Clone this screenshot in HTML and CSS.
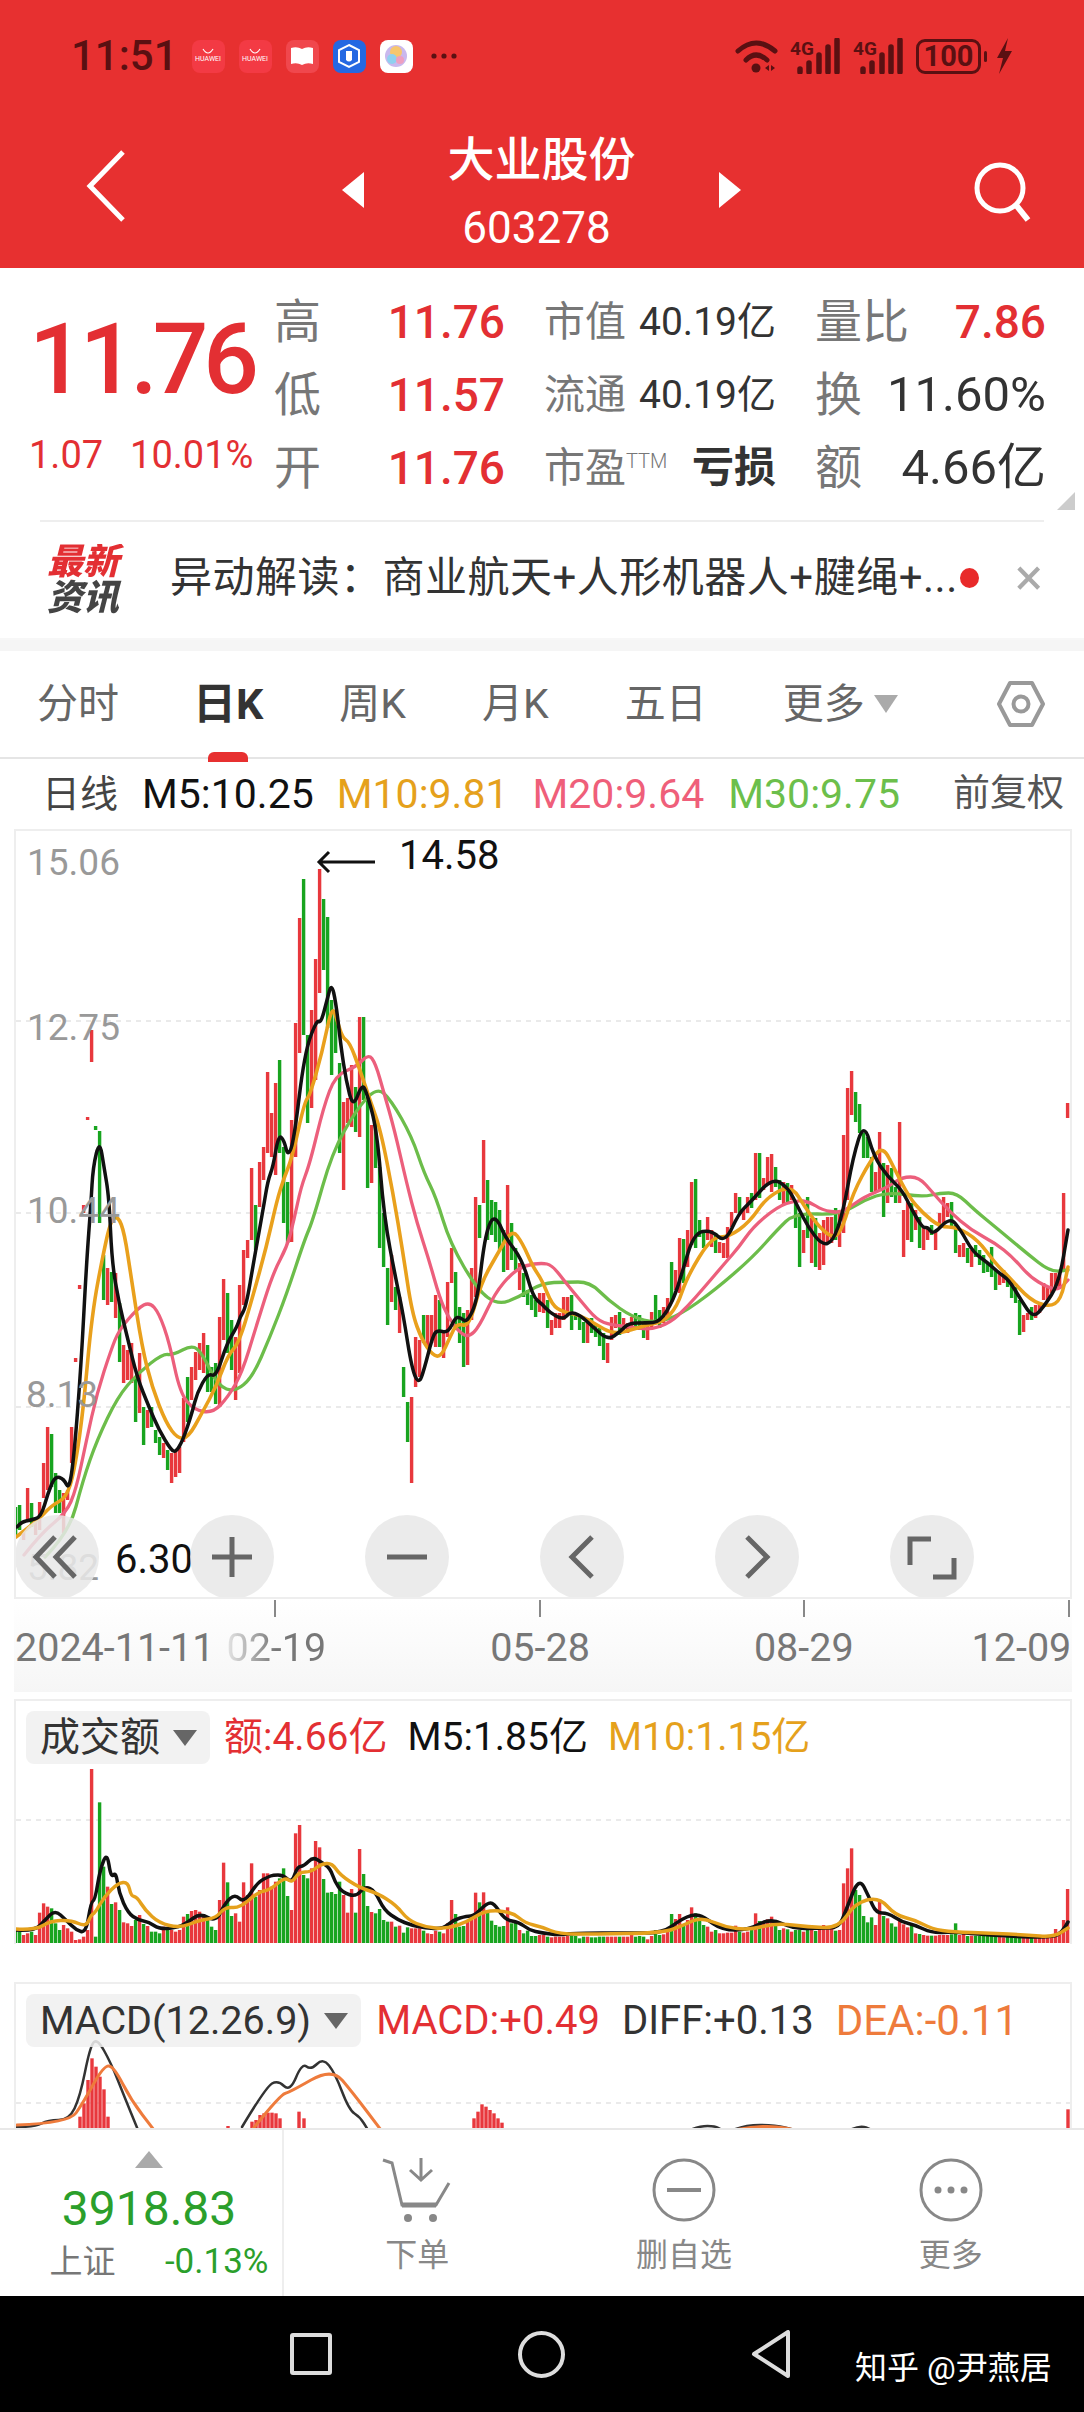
FILE: index.html
```html
<!DOCTYPE html>
<html lang="zh-CN">
<head>
	<meta charset="UTF-8">
	<title>大业股份 603278</title>
	<link rel="stylesheet" href="styles.css">
</head>
<body>
	<header class="top">
		<div class="status">
			<span class="time">11:51</span>
			<div class="apps">
				<span class="app app-hw"><svg width="14" height="7" viewBox="0 0 14 7"><path d="M2 1Q7 9 12 1" fill="none" stroke="#fff" stroke-width="1.2"/></svg><i>HUAWEI</i></span>
				<span class="app app-hw"><svg width="14" height="7" viewBox="0 0 14 7"><path d="M2 1Q7 9 12 1" fill="none" stroke="#fff" stroke-width="1.2"/></svg><i>HUAWEI</i></span>
				<span class="app app-book"><svg width="24" height="22" viewBox="0 0 24 22"><path d="M1 3Q7 1 12 4Q17 1 23 3V19Q17 17 12 20Q7 17 1 19Z" fill="#fff"/></svg></span>
				<span class="app app-blue"><svg width="28" height="28" viewBox="0 0 28 28"><path d="M14 3L24 8V20L14 25L4 20V8Z" fill="none" stroke="#fff" stroke-width="2"/><path d="M11 9V18Q14 21 17 18V9" fill="#fff"/></svg></span>
				<span class="app app-ball"><svg width="26" height="26" viewBox="0 0 26 26"><circle cx="13" cy="13" r="11" fill="#c9b8ee"/><circle cx="13" cy="9" r="6" fill="#f7c66e"/><circle cx="9" cy="16" r="5" fill="#8fd0ef"/><circle cx="17" cy="17" r="4" fill="#ee9fc0"/></svg></span>
			</div>
			<svg class="more-dots" width="26" height="6" viewBox="0 0 26 6"><circle cx="3" cy="3" r="2.6" fill="#5a1012"/><circle cx="13" cy="3" r="2.6" fill="#5a1012"/><circle cx="23" cy="3" r="2.6" fill="#5a1012"/></svg>
			<div class="sys">
				<svg class="wifi" width="43" height="36" viewBox="0 0 43 36">
					<path d="M3 13Q21-3 40 13M11 22Q21 12 32 22" fill="none" stroke="#5a1012" stroke-width="5" stroke-linecap="round"/>
					<circle cx="21" cy="30" r="4.5" fill="#5a1012"/>
					<path d="M30 30l4-3v6zM36 27l4 3-4 3z" fill="#5a1012"/>
				</svg>
				<svg class="signal" width="50" height="36" viewBox="0 0 50 36">
					<text x="0" y="17" class="signal-txt">4G</text>
					<path d="M10 31V34M19 25V34M29 17V34M38 9V34M47 2V34" stroke="#5a1012" stroke-width="5.5" stroke-linecap="round"/>
				</svg>
				<svg class="signal" width="50" height="36" viewBox="0 0 50 36">
					<text x="0" y="17" class="signal-txt">4G</text>
					<path d="M10 31V34M19 25V34M29 17V34M38 9V34M47 2V34" stroke="#5a1012" stroke-width="5.5" stroke-linecap="round"/>
				</svg>
				<span class="battery">100</span>
				<span class="battery-nub"></span>
				<svg class="bolt" width="18" height="36" viewBox="0 0 18 36"><path d="M13 0L2 20H8L4 36L17 13H10Z" fill="#5a1012"/></svg>
			</div>
		</div>
		<div class="title-row">
			<svg class="back" width="40" height="72" viewBox="0 0 40 72"><path d="M37 2L4 36L37 70" fill="none" stroke="#fff" stroke-width="5"/></svg>
			<div class="stock">
				<span class="tri tri-left"></span>
				<div class="stock-name">
					<div class="name">大业股份</div>
					<div class="code">603278</div>
				</div>
				<span class="tri tri-right"></span>
			</div>
			<svg class="search" width="60" height="62" viewBox="0 0 60 62"><circle cx="27" cy="26" r="23" fill="none" stroke="#fff" stroke-width="5"/><path d="M43 43L55 58" stroke="#fff" stroke-width="6"/></svg>
		</div>
	</header>

	<section class="quote">
		<div class="price-box">
			<div class="price">11.76</div>
			<div class="change"><span>1.07</span><span>10.01%</span></div>
		</div>
		<div class="stats">
			<div class="stat"><span class="lab lab-lg">高</span><span class="val red">11.76</span></div>
			<div class="stat"><span class="lab">市值</span><span class="num">40.19亿</span></div>
			<div class="stat"><span class="lab lab-lg">量比</span><span class="val red">7.86</span></div>
			<div class="stat"><span class="lab lab-lg">低</span><span class="val red">11.57</span></div>
			<div class="stat"><span class="lab">流通</span><span class="num">40.19亿</span></div>
			<div class="stat"><span class="lab lab-lg">换</span><span class="val val-dark">11.60%</span></div>
			<div class="stat"><span class="lab lab-lg">开</span><span class="val red">11.76</span></div>
			<div class="stat"><span class="lab">市盈<sup>TTM</sup></span><span class="num loss">亏损</span></div>
			<div class="stat"><span class="lab lab-lg">额</span><span class="val val-dark">4.66亿</span></div>
		</div>
		<span class="corner"></span>
	</section>

	<section class="news">
		<div class="news-logo"><b>最新资讯</b></div>
		<div class="news-text">异动解读：商业航天+人形机器人+腱绳+...</div>
		<span class="news-dot"></span>
		<span class="news-close">×</span>
	</section>
	<div class="band"></div>

	<nav class="tabs">
		<a class="tab">分时</a>
		<a class="tab on">日K</a>
		<a class="tab">周K</a>
		<a class="tab">月K</a>
		<a class="tab">五日</a>
		<a class="tab">更多<i class="tab-arrow"></i></a>
		<svg class="gear" width="50" height="48" viewBox="0 0 50 48"><path d="M14 3H36L47 24L36 45H14L3 24Z" fill="none" stroke="#999" stroke-width="4" stroke-linejoin="round"/><circle cx="25" cy="24" r="7.5" fill="none" stroke="#999" stroke-width="4"/></svg>
	</nav>

	<div class="legend">
		<span class="legend-name">日线</span>
		<span class="m5">M5:10.25</span>
		<span class="m10">M10:9.81</span>
		<span class="m20">M20:9.64</span>
		<span class="m30">M30:9.75</span>
		<span class="legend-right">前复权</span>
	</div>

	<section class="panel kline">
		<svg id="kline-svg" width="1054" height="766" viewBox="16 831 1054 766">
			<path class="grid-line" d="M16 1021H1070M16 1213H1070M16 1407H1070"/>
			<g id="kline-bars"></g>
			<g id="kline-lines"></g>
			<text class="axis-val" x="27" y="875">15.06</text>
			<text class="axis-val" x="27" y="1040">12.75</text>
			<text class="axis-val" x="27" y="1223">10.44</text>
			<text class="axis-val" x="26" y="1407">8.13</text>
			<text class="axis-val" x="27" y="1580">5.82</text>
			<path d="M375 862H320M329 852L319 862L329 872" fill="none" stroke="#111" stroke-width="3"/>
			<text class="mark-val" x="399" y="869">14.58</text>
			<text class="mark-val" x="115" y="1573">6.30</text>
		</svg>
		<div class="zoom-btns">
			<span class="zbtn"><svg width="84" height="84" viewBox="0 0 84 84"><path d="M40 22L21 42L40 62M60 22L41 42L60 62" class="zicon"/></svg></span>
			<span class="zbtn"><svg width="84" height="84" viewBox="0 0 84 84"><path d="M22 42H62M42 22V62" class="zicon"/></svg></span>
			<span class="zbtn"><svg width="84" height="84" viewBox="0 0 84 84"><path d="M22 42H62" class="zicon"/></svg></span>
			<span class="zbtn"><svg width="84" height="84" viewBox="0 0 84 84"><path d="M52 22L32 42L52 62" class="zicon"/></svg></span>
			<span class="zbtn"><svg width="84" height="84" viewBox="0 0 84 84"><path d="M32 22L52 42L32 62" class="zicon"/></svg></span>
			<span class="zbtn"><svg width="84" height="84" viewBox="0 0 84 84"><path d="M20 50V24H41M64 43V62H43" class="zicon"/></svg></span>
		</div>
	</section>

	<div class="axis">
		<div class="ticks"><i></i><i></i><i></i><i></i></div>
		<div class="dates">
			<span>2024-11-11</span>
			<span class="fade">02-19</span>
			<span>05-28</span>
			<span>08-29</span>
			<span>12-09</span>
		</div>
	</div>

	<section class="panel volume">
		<svg id="vol-svg" width="1054" height="243" viewBox="16 1701 1054 243">
			<path class="grid-line" d="M16 1820H1070"/>
			<g id="vol-bars"></g>
			<g id="vol-lines"></g>
		</svg>
		<div class="panel-head">
			<span class="chip">成交额<i class="chip-arrow"></i></span>
			<span class="red">额:4.66亿</span>
			<span class="m5">M5:1.85亿</span>
			<span class="m10">M10:1.15亿</span>
		</div>
	</section>

	<section class="panel macd">
		<svg id="macd-svg" width="1054" height="144" viewBox="16 1984 1054 144">
			<path class="grid-line" d="M16 2103H1070"/>
			<g id="macd-bars"></g>
			<g id="macd-lines"></g>
		</svg>
		<div class="panel-head">
			<span class="chip">MACD(12.26.9)<i class="chip-arrow"></i></span>
			<span class="red">MACD:+0.49</span>
			<span class="diff">DIFF:+0.13</span>
			<span class="dea">DEA:-0.11</span>
		</div>
	</section>

	<footer class="bottom">
		<div class="index">
			<i class="index-arrow"></i>
			<div class="index-val">3918.83</div>
			<div class="index-row"><span class="index-name">上证</span><span class="index-pct">-0.13%</span></div>
		</div>
		<a class="action">
			<svg width="76" height="72" viewBox="0 0 76 72"><path d="M4 6L13 9L23 51H57L70 29" fill="none" stroke="#888" stroke-width="3"/><path d="M23 51H57" stroke="#888" stroke-width="5"/><path d="M42 4V25M31 16L42 26L53 16" fill="none" stroke="#888" stroke-width="3"/><circle cx="29" cy="64" r="4" fill="#888"/><circle cx="54" cy="64" r="4" fill="#888"/></svg>
			<span>下单</span>
		</a>
		<a class="action">
			<svg width="76" height="72" viewBox="0 0 76 72"><circle cx="38" cy="36" r="30" fill="none" stroke="#888" stroke-width="3"/><path d="M21 36H55" stroke="#888" stroke-width="4"/></svg>
			<span>删自选</span>
		</a>
		<a class="action">
			<svg width="76" height="72" viewBox="0 0 76 72"><circle cx="38" cy="36" r="30" fill="none" stroke="#888" stroke-width="3"/><circle cx="25" cy="36" r="3.5" fill="#888"/><circle cx="38" cy="36" r="3.5" fill="#888"/><circle cx="51" cy="36" r="3.5" fill="#888"/></svg>
			<span>更多</span>
		</a>
	</footer>

	<div class="sysnav">
		<span class="nav-square"></span>
		<span class="nav-circle"></span>
		<svg width="40" height="48" viewBox="0 0 40 48"><path d="M37 2V46L3 24Z" fill="none" stroke="#ddd" stroke-width="4" stroke-linejoin="round"/></svg>
		<span class="watermark">知乎 @尹燕居</span>
	</div>

	<script src="chart.js"></script>
</body>
</html>
```

FILE: styles.css
```css
html,body{
	margin:0;
	background:#fff;
}
body{
	width:1084px;
	height:2412px;
	overflow:hidden;
	font-family:Roboto,"Noto Sans CJK SC",sans-serif;
	color:#333;
}
i{font-style:normal;}
.red{color:#e32f33;}

/* header */
.top{
	height:268px;
	background:#e73030;
	color:#fff;
}
.status{
	height:112px;
	padding:0 71px;
	display:flex;
	align-items:center;
	box-sizing:border-box;
}
.time{
	font-size:42px;
	font-weight:500;
	line-height:48px;
	color:#5a1012;
}
.apps{
	display:flex;
	gap:14px;
	margin-left:14px;
}
.app{
	width:33px;
	height:33px;
	border-radius:8px;
	display:flex;
	flex-direction:column;
	align-items:center;
	justify-content:center;
	overflow:hidden;
}
.app-hw{background:#f33a44;}
.app-hw i{
	font-size:7px;
	line-height:9px;
	color:#fff;
}
.app-book{background:#f0474d;}
.app-blue{background:#2468e2;}
.app-ball{background:#fff;}
.more-dots{margin-left:18px;}
.sys{
	margin-left:auto;
	display:flex;
	align-items:center;
}
.signal,.wifi{display:block;}
.wifi{margin-right:12px;}
.signal{margin-right:13px;}
.signal-txt{
	font-size:19px;
	font-weight:700;
	fill:#5a1012;
}
.battery{
	width:65px;
	height:35px;
	box-sizing:border-box;
	border:3px solid #5a1012;
	border-radius:9px;
	text-align:center;
	font-size:29px;
	font-weight:700;
	line-height:29px;
	color:#5a1012;
}
.battery-nub{
	width:3px;
	height:11px;
	margin:0 8px 0 3px;
	background:#5a1012;
	border-radius:2px;
}
.title-row{
	margin-top:14px;
	padding:0 51px 0 86px;
	display:flex;
	align-items:center;
	justify-content:space-between;
}
.back{
	align-self:flex-start;
	margin-top:24px;
}
.search{
	align-self:flex-start;
	margin-top:36px;
}
.stock{
	display:flex;
	align-items:center;
	width:399px;
	justify-content:space-between;
	margin-left:-16px;
}
.tri{
	width:0;
	height:0;
	border-top:18px solid transparent;
	border-bottom:18px solid transparent;
	margin-bottom:8px;
}
.tri-left{border-right:22px solid #fff;}
.tri-right{border-left:22px solid #fff;}
.stock-name{text-align:center;}
.name{
	font-size:47px;
	font-weight:500;
	line-height:68px;
}
.code{
	margin-right:10px;
	font-size:44px;
	line-height:68px;
}

/* quote */
.quote{
	position:relative;
	height:252px;
	padding:17px 0 0 29px;
	box-sizing:border-box;
	display:flex;
}
.price-box{
	width:245px;
	flex:none;
}
.price{
	font-size:98px;
	font-weight:500;
	letter-spacing:-5px;
	line-height:110px;
	margin-top:20px;
	color:#e32f33;
}
.change{
	display:flex;
	gap:27px;
	margin-top:18px;
	font-size:38px;
	line-height:44px;
	color:#e32f33;
}
.stats{
	display:grid;
	grid-template-columns:231px 232px 231px;
	grid-auto-rows:73px;
	column-gap:39px;
}
.stat{
	display:flex;
	align-items:center;
	justify-content:space-between;
}
.lab{
	font-size:41px;
	color:#777;
	line-height:50px;
}
.lab-lg{font-size:47px;}
.lab sup{
	font-size:20px;
	font-weight:300;
	vertical-align:14px;
	line-height:0;
}
.val{
	font-size:46px;
	font-weight:500;
	line-height:50px;
}
.val-dark{
	font-size:49px;
	font-weight:400;
}
.num{
	font-size:39px;
	line-height:50px;
}
.loss{
	font-size:42px;
	font-weight:700;
}
.corner{
	position:absolute;
	right:9px;
	bottom:10px;
	width:0;
	height:0;
	border-left:18px solid transparent;
	border-bottom:18px solid #ccc;
}

/* news */
.news{
	height:111px;
	margin:0 40px;
	border-top:2px solid #eee;
	display:flex;
	align-items:center;
	position:relative;
}
.news-logo{
	width:130px;
	padding:4px 0 0 7px;
	box-sizing:border-box;
	flex:none;
}
/* one word on two lines: red above, dark below */
.news-logo b{
	display:block;
	width:72px;
	padding-right:8px;
	font-size:36px;
	font-weight:900;
	font-style:italic;
	line-height:36px;
	background:linear-gradient(#e32f33 50%,#444 50%);
	-webkit-background-clip:text;
	background-clip:text;
	color:transparent;
}
.news-text{
	font-size:42px;
	letter-spacing:.5px;
	line-height:50px;
	white-space:nowrap;
	width:790px;
}
.news-dot{
	width:19px;
	height:20px;
	border-radius:50%;
	background:#e82a2a;
}
.news-close{
	margin-left:36px;
	font-size:52px;
	line-height:50px;
	color:#aaa;
}
.band{
	height:11px;
	margin-top:5px;
	border-top:2px solid #f7f7f7;
	background:#f5f5f5;
}

/* tabs */
.tabs{
	position:relative;
	height:108px;
	padding:0 38px 0 37px;
	box-sizing:border-box;
	border-bottom:2px solid #e5e5e5;
	display:flex;
	align-items:center;
	gap:76px;
}
.tab{
	font-size:41px;
	line-height:50px;
	color:#666;
	display:flex;
	align-items:center;
}
.tab.on{
	color:#333;
	font-weight:700;
	font-size:43px;
	margin-left:-2px;
	position:relative;
}
.tab.on:after{
	content:"";
	position:absolute;
	left:15px;
	bottom:-33px;
	width:40px;
	height:10px;
	border-radius:6px 6px 0 0;
	background:#e73030;
}
.tab-arrow{
	width:0;
	height:0;
	margin-left:9px;
	border-left:12px solid transparent;
	border-right:12px solid transparent;
	border-top:18px solid #aaa;
}
.gear{
	margin-left:auto;
}

/* legend */
.legend{
	height:70px;
	padding:0 20px 0 42px;
	box-sizing:border-box;
	display:flex;
	align-items:center;
	font-size:41px;
	line-height:46px;
	color:#111;
	white-space:nowrap;
}
.legend-name{
	margin-right:24px;
	font-size:38px;
	color:#444;
}
.legend .m10{margin-left:23px;}
.legend .m20{margin-left:24px;}
.legend .m30{margin-left:24px;}
.legend-right{
	margin-left:auto;
	font-size:37px;
	color:#555;
}
.m5{color:#111;}
.m10{color:#e5a11c;}
.m20{color:#ef5f7a;}
.m30{color:#6cbf4b;}
.diff{color:#333;}
.dea{
	color:#ee7b3c;
	font-size:42px;
}

/* panels */
.panel{
	position:relative;
	width:1058px;
	margin-left:14px;
	box-sizing:border-box;
	border:2px solid #eee;
	overflow:hidden;
}
.panel svg{display:block;}
.kline{height:770px;}
.volume{
	height:245px;
	border-bottom:0;
	margin-bottom:38px;
}
.macd{
	height:146px;
	border-bottom:0;
}
.grid-line{
	fill:none;
	stroke:#e4e4e4;
	stroke-width:1.5;
	stroke-dasharray:5 5;
}
.axis-val{
	font-size:37px;
	fill:#999;
}
.mark-val{
	font-size:40px;
	fill:#111;
}
.zoom-btns{
	position:absolute;
	left:-1px;
	top:684px;
	display:flex;
	gap:91px;
}
.zbtn{
	width:84px;
	height:84px;
	border-radius:50%;
	background:rgba(232,232,232,.86);
}
.zicon{
	fill:none;
	stroke:#666;
	stroke-width:5;
}
.axis{
	height:93px;
	width:1058px;
	margin:0 0 7px 14px;
	background:linear-gradient(#fff,#f6f6f6);
}
.ticks{
	height:17px;
	padding:1px 2px 0 260px;
	display:flex;
	justify-content:space-between;
}
.ticks i{
	width:2px;
	background:#888;
}
.dates{
	margin-top:8px;
	padding-left:1px;
	display:flex;
	font-size:39.5px;
	line-height:46px;
	color:#777;
	white-space:nowrap;
}
.dates span{margin-left:164px;}
.dates span:first-child{margin-left:0;}
.dates .fade{
	margin-left:12px;
	background:linear-gradient(90deg,#e6e6e6,#777 50%);
	-webkit-background-clip:text;
	background-clip:text;
	color:transparent;
}
.dates span:last-child{margin-left:118px;}
.panel-head{
	position:absolute;
	left:10px;
	top:10px;
	display:flex;
	align-items:center;
	gap:20px;
	font-size:39px;
	line-height:53px;
	white-space:nowrap;
}
.macd .panel-head{
	font-size:40px;
	gap:22px;
}
.panel-head .chip{
	height:53px;
	padding:0 13px 0 14px;
	margin-right:-6px;
	border-radius:8px;
	background:rgba(240,240,240,.86);
	color:#333;
	font-size:40px;
	display:flex;
	align-items:center;
}
.macd .panel-head .chip{
	font-size:39.5px;
	margin-right:-7px;
}
.chip-arrow{
	width:0;
	height:0;
	margin-left:13px;
	border-left:12px solid transparent;
	border-right:12px solid transparent;
	border-top:16px solid #666;
}

/* bottom bar */
.bottom{
	height:168px;
	box-sizing:border-box;
	border-top:2px solid #e8e8e8;
	background:#fff;
	display:flex;
}
.index{
	width:284px;
	flex:none;
	padding-left:16px;
	box-sizing:border-box;
	border-right:2px solid #eee;
	display:flex;
	flex-direction:column;
	align-items:center;
}
.index-arrow{
	width:0;
	height:0;
	margin-top:21px;
	border-left:14px solid transparent;
	border-right:14px solid transparent;
	border-bottom:17px solid #aaa;
}
.index-val{
	margin-top:13px;
	font-size:48px;
	line-height:56px;
	color:#2b9f2b;
}
.index-row{
	margin:5px 0 0 20px;
	width:219px;
	display:flex;
	justify-content:space-between;
	align-items:center;
	line-height:40px;
}
.index-name{
	font-size:33px;
	color:#777;
}
.index-pct{
	font-size:35px;
	color:#2b9f2b;
}
.action{
	flex:1;
	padding-top:24px;
	display:flex;
	flex-direction:column;
	align-items:center;
	font-size:32px;
	line-height:40px;
	color:#888;
}
.action svg{display:block;}
.action span{margin-top:9px;}
.sysnav{
	position:relative;
	height:116px;
	padding-left:290px;
	background:#000;
	display:flex;
	align-items:center;
}
.nav-square{
	width:42px;
	height:42px;
	box-sizing:border-box;
	border:4px solid #ddd;
	border-radius:3px;
}
.nav-circle{
	width:47px;
	height:47px;
	margin:0 186px;
	box-sizing:border-box;
	border:4px solid #ddd;
	border-radius:50%;
}
.watermark{
	position:absolute;
	left:855px;
	top:52px;
	font-size:32px;
	line-height:40px;
	color:#fff;
	white-space:nowrap;
}
```

FILE: chart.js
```js
var RED = '#e8383d', GREEN = '#18a41f';
var NS = 'http://www.w3.org/2000/svg';
var STEP = 4, START = 15.6;

// one day per entry: colour, high y, low y
var days = ('g1507-1537 g1505-1530 r1530-1540 r1488-1520 g1503-1527 r1520-1535 r1502-1530 r1463-1498 r1427-1490 g1434-1487 ' +
	'g1473-1513 g1490-1513 r1493-1533 r1490-1500 r1427-1463 r1358-1362 r1285-1289 r1205-1213 r1117-1120 r1030-1062 ' +
	'g1126-1130 g1131-1223 g1255-1300 r1268-1305 g1272-1302 r1273-1318 g1303-1362 r1345-1383 r1350-1380 r1343-1383 ' +
	'g1377-1422 r1353-1413 g1407-1445 r1410-1428 g1407-1427 g1430-1443 g1437-1455 r1443-1458 g1450-1470 r1453-1483 ' +
	'r1450-1477 r1447-1473 r1398-1442 g1377-1422 r1367-1400 r1352-1380 r1343-1370 r1333-1373 g1345-1392 g1367-1392 ' +
	'g1363-1404 r1317-1407 r1279-1340 g1293-1353 g1320-1370 r1337-1400 r1285-1373 r1250-1305 r1240-1258 r1168-1240 ' +
	'g1205-1250 r1162-1207 r1147-1180 r1072-1153 r1113-1157 r1083-1175 g1060-1153 g1147-1223 g1182-1243 r1120-1242 ' +
	'r1023-1157 r918-1053 g879-1035 g1035-1123 r1010-1108 r959-1080 r869-993 g899-970 g917-1028 g1000-1075 ' +
	'g1010-1053 g1063-1153 r1102-1190 r1098-1123 r1065-1127 g1087-1132 r1017-1137 g1017-1100 g1100-1188 r1125-1183 ' +
	'g1117-1168 g1167-1248 g1213-1267 g1268-1325 r1255-1302 g1287-1310 r1297-1333 g1367-1397 g1402-1442 r1397-1483 ' +
	'r1337-1387 r1340-1377 g1315-1343 r1315-1347 r1315-1343 r1295-1347 g1300-1347 r1333-1358 r1282-1337 r1248-1283 ' +
	'g1272-1330 g1307-1343 g1313-1367 r1310-1365 r1268-1320 r1197-1297 g1205-1238 r1140-1203 g1180-1240 g1200-1235 ' +
	'g1202-1242 g1210-1250 g1230-1272 r1185-1270 g1223-1260 g1248-1270 r1263-1290 g1273-1297 g1290-1305 g1295-1310 ' +
	'g1300-1317 r1293-1312 r1293-1313 g1300-1328 r1320-1335 r1313-1328 r1313-1328 r1297-1320 r1297-1312 g1295-1330 ' +
	'g1313-1320 g1317-1330 g1322-1343 r1318-1343 g1318-1333 g1325-1337 g1328-1346 g1333-1360 r1343-1363 r1317-1340 ' +
	'r1315-1328 g1312-1335 r1318-1333 r1323-1333 r1317-1330 g1313-1330 g1315-1330 g1323-1338 r1325-1340 r1312-1328 ' +
	'g1295-1320 g1310-1328 r1307-1323 r1298-1320 g1262-1302 r1270-1290 r1238-1293 g1239-1283 r1230-1267 r1182-1245 ' +
	'g1179-1248 g1220-1237 g1233-1248 r1217-1240 r1230-1247 g1233-1253 r1242-1253 r1243-1258 r1227-1258 r1212-1227 ' +
	'r1193-1213 g1197-1213 r1208-1220 r1197-1213 g1193-1208 r1153-1200 g1153-1198 r1178-1190 r1157-1185 r1154-1192 ' +
	'g1167-1187 g1180-1200 r1182-1205 g1183-1202 r1185-1200 g1203-1228 g1213-1267 r1230-1253 g1197-1238 r1218-1263 ' +
	'g1218-1267 r1233-1270 r1220-1265 r1217-1242 r1217-1243 g1208-1240 r1213-1247 r1135-1233 r1088-1200 r1071-1115 ' +
	'g1092-1122 g1104-1133 g1133-1158 g1137-1158 g1157-1192 r1172-1192 r1132-1190 g1163-1217 r1165-1203 g1168-1197 ' +
	'g1187-1203 r1122-1203 r1210-1257 r1202-1240 g1203-1242 r1210-1230 g1217-1248 r1227-1250 r1228-1240 g1225-1235 ' +
	'r1232-1250 r1213-1227 r1197-1223 r1203-1217 g1202-1227 g1225-1253 r1245-1257 r1243-1257 g1248-1263 r1250-1267 ' +
	'g1245-1257 g1250-1265 g1255-1273 g1263-1272 g1247-1277 g1270-1290 r1273-1285 r1270-1283 g1278-1287 g1282-1298 ' +
	'g1287-1303 g1300-1335 r1315-1332 r1313-1320 g1307-1320 r1305-1318 r1302-1313 r1283-1300 r1288-1300 r1273-1293 ' +
	'r1273-1290 r1270-1287 r1193-1270 r1103-1118').split(' ');

// traded amount of each day, as read off the panel (608 is the zero line)
var amounts = [568,575,585,580,575,585,518,490,500,505,550,570,555,565,575,600,598,590,570,87,590,187,380,440,492,487,510,547,550,558,
	540,525,552,558,575,575,580,560,570,570,575,570,530,522,513,510,515,525,540,560,570,480,368,427,528,520,545,427,465,370,
	470,450,400,400,440,425,415,385,468,510,280,255,405,415,385,303,322,417,458,456,462,425,465,518,447,518,327,402,498,516,
	520,507,540,545,545,560,557,578,562,565,565,565,572,580,582,572,575,580,550,480,522,560,558,545,540,458,487,457,515,542,
	555,560,558,502,550,545,570,580,572,588,588,585,585,590,592,590,590,590,588,587,588,595,590,590,592,592,590,590,590,590,
	590,590,590,590,585,590,588,590,598,588,570,585,583,575,522,537,522,555,540,502,520,540,555,560,575,570,580,580,578,578,
	557,575,578,575,565,520,543,548,538,530,555,570,565,568,575,570,570,575,568,570,573,558,555,560,560,572,570,430,385,325,
	450,465,528,547,532,555,480,528,535,550,560,540,553,562,555,580,582,585,587,587,587,585,585,585,583,550,585,582,588,587,
	587,588,587,587,587,587,590,592,587,588,590,590,590,592,593,592,592,593,592,590,567,575,540,447];

var ma5 = [[17,1527],[21,1522],[31,1520],[41,1517],[48,1493],[55,1476],[64,1479],[69,1490],[74,1457],[81,1367],[86.5,1263],[91,1203],[93,1167],[99.6,1140],[104,1167],[109,1197],[112,1263],[119,1303],[128,1340],[137,1377],[149,1407],[159,1430],[171,1450],[176,1452],[183,1440],[192,1413],[197,1393],[208,1373],[216,1377],[227,1343],[237,1327],[240,1317],[246,1307],[254,1260],[263,1210],[268,1180],[273,1167],[278.5,1135],[284,1140],[288,1157],[294,1140],[304.5,1053],[316.6,1020],[321,1023],[327,1000],[331.5,983],[336,1003],[341,1047],[346,1080],[353,1108],[361.6,1085],[366,1090],[377,1130],[384,1217],[396,1280],[403,1313],[412,1370],[419,1384],[424,1370],[432.5,1337],[437,1330],[448,1333],[455,1318],[460,1317],[467,1323],[477.5,1300],[484,1243],[491,1218],[498,1220],[505,1237],[522.5,1260],[533,1297],[542,1304],[549,1312],[563,1320],[570,1312],[580,1315],[594,1328],[608,1340],[620,1332],[628.5,1323],[646,1323],[660,1322],[673.5,1300],[682,1273],[694,1233],[711.5,1230],[725,1243],[739,1213],[749.6,1203],[772,1178],[787.7,1187],[798,1207],[808,1227],[822,1245],[832.7,1242],[843,1213],[853,1157],[864,1122],[874,1157],[888,1177],[902,1190],[912,1210],[922.6,1228],[928,1227],[933,1235],[950,1217],[960.7,1230],[972.8,1252],[988,1263],[999,1273],[1009,1280],[1021,1300],[1033,1318],[1043.7,1307],[1059,1283],[1068,1230]];
var ma10 = [[16,1537],[35,1523],[52,1505],[66,1498],[74,1473],[83,1413],[92,1313],[104,1250],[111,1220],[118,1216],[124.5,1233],[131.5,1280],[142,1347],[152,1387],[166,1423],[178,1439],[188.6,1437],[202,1413],[216,1387],[228,1355],[239,1343],[252.6,1297],[266.4,1247],[277,1200],[284,1178],[292,1158],[304.5,1102],[310,1095],[322,1053],[332,1005],[337,1020],[342.6,1038],[349.5,1042],[360,1070],[370,1100],[380.6,1130],[393,1193],[403,1253],[412,1313],[422,1340],[432.5,1355],[441,1357],[450,1337],[457,1323],[469,1327],[481,1283],[498,1253],[512,1229],[522.5,1243],[533,1267],[542,1280],[552,1305],[563,1312],[580,1315],[597,1325],[611,1333],[625,1332],[646,1325],[663,1322],[677,1307],[687,1277],[711.5,1237],[729,1237],[749.6,1222],[767,1197],[791,1185],[805,1207],[819,1227],[834,1239],[843,1227],[853,1193],[870.7,1160],[883,1146],[895,1170],[909,1197],[922.6,1213],[940,1227],[957,1227],[978,1240],[995,1263],[1009,1277],[1030,1300],[1049,1307],[1061,1300],[1068,1267]];
var ma20 = [[24,1555],[41.5,1533],[66,1513],[76,1490],[86.5,1440],[97,1393],[111,1350],[119,1330],[138,1308],[149.5,1302],[159,1313],[169.5,1343],[180,1393],[194,1410],[213,1413],[228,1397],[242,1373],[256,1327],[273,1273],[287,1247],[294,1220],[301,1187],[310,1163],[323.5,1107],[335.6,1075],[356,1067],[368.5,1054],[375.4,1063],[384,1093],[394.5,1130],[406.6,1183],[417,1223],[429,1260],[439.4,1297],[448,1317],[460,1333],[469,1337],[479,1327],[495,1293],[512,1273],[526,1265],[542,1263],[552,1265],[566,1283],[580,1300],[597,1320],[611,1325],[632,1327],[649,1330],[670,1323],[687,1307],[704.6,1287],[725,1263],[739,1247],[753,1227],[777,1207],[796,1200],[810,1202],[822,1210],[839.6,1213],[850,1207],[864,1197],[888,1187],[902,1177],[919,1177],[933,1193],[950,1212],[971,1230],[995,1243],[1012.6,1257],[1030,1277],[1047,1287],[1059,1290],[1068,1280]];
var ma30 = [[45,1557],[69,1533],[83,1480],[97,1440],[117.6,1397],[138,1373],[162.6,1354],[173,1355],[192,1345],[202,1353],[218,1386],[235,1392],[252.6,1377],[270,1337],[287,1293],[304.5,1240],[313,1220],[332,1153],[356,1110],[377,1087],[391,1100],[412,1137],[424,1173],[436,1197],[450,1243],[477.5,1290],[498,1305],[519,1297],[542,1283],[566,1282],[590,1282],[608,1300],[632,1317],[656,1323],[680,1315],[715,1290],[753,1257],[777,1230],[794.6,1213],[839.6,1215],[864,1200],[888,1192],[922.6,1197],[940,1193],[957,1193],[974.5,1210],[999,1230],[1026.4,1253],[1050.6,1272],[1068,1270]];

var vol5 = [[16,1930],[35,1931],[45,1920],[55,1910],[66,1920],[76,1930],[86,1933],[91,1902],[95,1900],[100,1870],[107,1852],[111,1878],[116,1872],[119,1893],[128,1913],[138,1920],[149,1922],[159,1929],[176,1928],[187,1923],[200,1913],[216,1922],[225,1903],[235,1894],[244,1903],[258,1882],[268,1877],[273,1875],[283,1875],[292,1883],[297,1867],[304,1866],[313,1857],[321,1862],[330,1868],[335,1882],[342,1892],[356,1897],[365,1886],[375,1891],[384,1910],[398,1920],[411,1925],[425,1928],[443,1929],[453,1920],[467,1916],[474,1916],[487,1903],[494,1903],[505,1920],[519,1922],[529,1930],[542,1933],[559,1935],[577,1933],[628,1933],[663,1933],[680,1920],[694,1914],[704,1917],[722,1930],[749,1930],[770,1918],[794,1929],[819,1928],[839,1928],[846,1910],[859,1877],[869,1897],[876,1913],[888,1913],[902,1922],[915,1925],[932,1933],[953,1932],[991,1935],[1026,1937],[1054,1937],[1062,1932],[1068,1922]];
var vol10 = [[16,1929],[36,1930],[50,1921],[71,1920],[86,1927],[91,1915],[95,1913],[104,1897],[118,1883],[128,1882],[131,1896],[137,1897],[145,1910],[159,1923],[180,1928],[200,1920],[216,1918],[225,1907],[240,1908],[258,1892],[270,1890],[285,1877],[292,1883],[299,1872],[311,1872],[321,1864],[332,1863],[340,1875],[360,1888],[377,1893],[396,1905],[408,1920],[425,1927],[446,1929],[467,1922],[486,1910],[512,1912],[525,1923],[542,1927],[559,1934],[594,1934],[663,1933],[684,1925],[701,1917],[725,1927],[749,1930],[777,1923],[808,1927],[839,1928],[855,1903],[879,1897],[895,1915],[915,1920],[932,1929],[953,1932],[991,1933],[1026,1935],[1054,1937],[1068,1928]];

var diffLine = [[[17,2127],[35,2127],[48,2120],[69,2120],[80,2097],[90,2047],[97,2038],[111,2063],[124.5,2097],[138,2130]],
	[[242,2127],[266,2087],[278,2080],[290,2092],[302,2063],[311,2070],[323,2058],[335,2073],[349,2110],[360,2117],[368,2130]],
	[[690,2130],[700,2126],[715,2126],[722,2130]],[[733,2130],[745,2125],[775,2125],[795,2130]],[[850,2130],[860,2125],[872,2130]]];
var deaLine = [[[17,2125],[69,2123],[83,2103],[104,2065],[114,2067],[131,2100],[154,2130]],
	[[252,2130],[280,2095],[290,2092],[332,2068],[353,2093],[381,2130]],
	[[735,2130],[750,2127],[775,2126],[795,2130]]];
var macdBars = [[80,440],[84,400],[88,330],[92,265],[96,290],[100,320],[104,358],[108,440],[228,468],[252,455],[256,450],[260,435],[264,430],[268,428],[272,428],[276,430],[280,445],[299,425],[304,445],[474,445],[478,425],[482,403],[486,410],[490,420],[494,430],[498,445],[502,458],[1068,418]];

function el (name, attrs, parent) {
	var node = document.createElementNS(NS, name);
	for (var key in attrs) {
		node.setAttribute(key, attrs[key]);
	}
	parent.appendChild(node);
	return node;
}

// rounds the corners of a traced line
function curve (pts) {
	var d = 'M' + pts[0][0] + ' ' + pts[0][1];
	for (var i = 1; i < pts.length - 1; i++) {
		var mx = (pts[i][0] + pts[i + 1][0]) / 2;
		var my = (pts[i][1] + pts[i + 1][1]) / 2;
		d += 'Q' + pts[i][0] + ' ' + pts[i][1] + ' ' + mx + ' ' + my;
	}
	var last = pts[pts.length - 1];
	return d + 'L' + last[0] + ' ' + last[1];
}

function line (parent, pts, color, width) {
	el('path', {d: curve(pts), fill: 'none', stroke: color, 'stroke-width': width, 'stroke-linejoin': 'round', 'stroke-linecap': 'round'}, parent);
}

function bar (parent, x, top, bottom, color) {
	el('rect', {x: x - 1.7, y: top, width: 3.4, height: bottom - top, fill: color}, parent);
}

var klineBars = document.querySelector('#kline-bars');
var volBars = document.querySelector('#vol-bars');
var macdGroup = document.querySelector('#macd-bars');

days.forEach(function (day, i) {
	var color = day.charAt(0) === 'r' ? RED : GREEN;
	var ends = day.slice(1).split('-');
	var x = START + i * STEP;
	bar(klineBars, x, +ends[0], +ends[1], color);
	bar(volBars, x, 1740 + amounts[i] / 3, 1943, color);
});

macdBars.forEach(function (b) {
	bar(macdGroup, b[0], 1970 + b[1] / 3, 2130, RED);
});

var klineLines = document.querySelector('#kline-lines');
line(klineLines, ma30, '#6cbd4a', 3.3);
line(klineLines, ma20, '#ec5f7c', 3.3);
line(klineLines, ma10, '#e9a01c', 3.6);
line(klineLines, ma5, '#111', 3.5);

var volLines = document.querySelector('#vol-lines');
line(volLines, vol5, '#111', 3.5);
line(volLines, vol10, '#e5a11c', 3.5);

var macdLines = document.querySelector('#macd-lines');
diffLine.forEach(function (pts) { line(macdLines, pts, '#333', 2.5); });
deaLine.forEach(function (pts) { line(macdLines, pts, '#ee7b3c', 3); });
```
